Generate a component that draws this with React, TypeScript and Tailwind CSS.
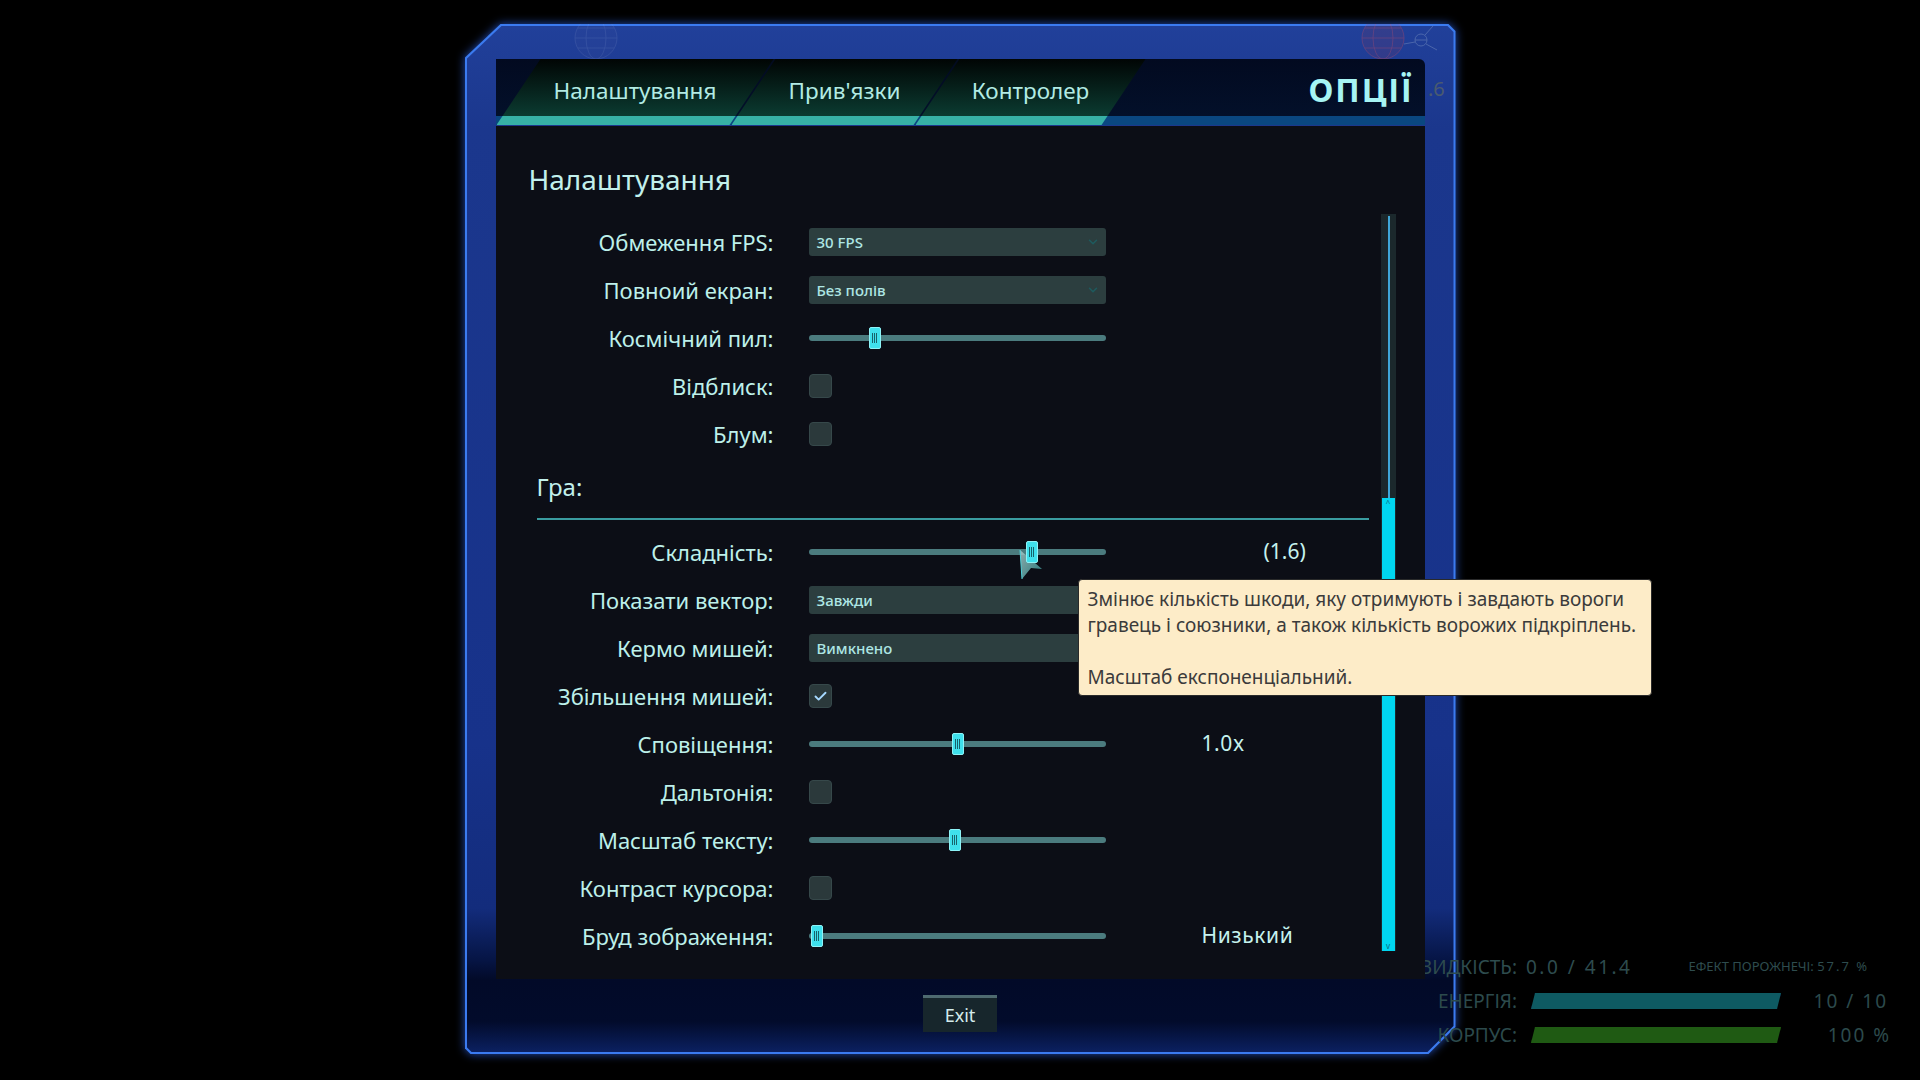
import { Check, ChevronDown } from "lucide-react";

type Row =
  | { label: string; kind: "select"; value: string }
  | { label: string; kind: "check"; checked?: boolean }
  | { label: string; kind: "slider"; thumb: number; value?: string; far?: boolean; cursor?: boolean };

const display: Row[] = [
  { label: "Обмеження FPS:", kind: "select", value: "30 FPS" },
  { label: "Повноий екран:", kind: "select", value: "Без полів" },
  { label: "Космічний пил:", kind: "slider", thumb: 60 },
  { label: "Відблиск:", kind: "check" },
  { label: "Блум:", kind: "check" },
];

const game: Row[] = [
  { label: "Складність:", kind: "slider", thumb: 217, value: "(1.6)", far: true, cursor: true },
  { label: "Показати вектор:", kind: "select", value: "Завжди" },
  { label: "Кермо мишей:", kind: "select", value: "Вимкнено" },
  { label: "Збільшення мишей:", kind: "check", checked: true },
  { label: "Сповіщення:", kind: "slider", thumb: 143, value: "1.0x" },
  { label: "Дальтонія:", kind: "check" },
  { label: "Масштаб тексту:", kind: "slider", thumb: 140 },
  { label: "Контраст курсора:", kind: "check" },
  { label: "Бруд зображення:", kind: "slider", thumb: 2, value: "Низький" },
];

const Slider = ({ thumb, cursor }: { thumb: number; cursor?: boolean }) => (
  <div className="relative h-[22px] w-[297px]">
    <div className="absolute left-0 right-0 top-[8px] h-[6px] rounded-full bg-[#4b7b7e]" />
    {cursor && (
      <svg className="absolute left-[208px] top-[6px]" width="36" height="36" viewBox="0 0 36 36">
        <defs>
          <linearGradient id="cur" x1="0" y1="0" x2="1" y2="1">
            <stop offset="0" stopColor="#a8c8c8" />
            <stop offset="1" stopColor="#2a8c8c" />
          </linearGradient>
        </defs>
        <polygon points="3,3 25,22 14,21 5,32" fill="url(#cur)" opacity="0.85" />
        <polyline points="3,3 5,32" stroke="#4fd0d8" strokeWidth="1" fill="none" />
      </svg>
    )}
    <div
      className="absolute top-0 flex h-[22px] w-[12px] items-center justify-center gap-[1px] rounded-[2px] border border-[#8ef3f7] bg-[#3fe0ec]"
      style={{ left: thumb }}
    >
      <span className="h-[10px] w-px bg-[#17626b]" />
      <span className="h-[10px] w-px bg-[#17626b]" />
      <span className="h-[10px] w-px bg-[#17626b]" />
    </div>
  </div>
);

const Control = ({ row }: { row: Row }) => {
  if (row.kind === "select") {
    return (
      <div className="flex h-[28px] w-[297px] items-center justify-between rounded-[3px] bg-[#2c3e3f] pl-[8px] pr-[6px]">
        <span className="text-[15px] font-medium text-[#aee6e4]">{row.value}</span>
        <ChevronDown size={14} strokeWidth={2.5} color="#1e5b5e" />
      </div>
    );
  }
  if (row.kind === "check") {
    return (
      <div className="flex h-[24px] w-[23px] items-center justify-center rounded-[4px] border border-[#36484a] bg-[#2b393b]">
        {row.checked && <Check size={15} strokeWidth={3} color="#a6d8ff" />}
      </div>
    );
  }
  return <Slider thumb={row.thumb} cursor={row.cursor} />;
};

const SettingRow = ({ row }: { row: Row }) => (
  <div className="flex h-[48px] items-center">
    <div className="w-[245px] whitespace-nowrap text-right text-[22px] text-[#bdf0ea]">{row.label}</div>
    <div className="ml-[35px]">
      <Control row={row} />
    </div>
    {row.kind === "slider" && row.value && (
      <div
        className={
          row.far
            ? "ml-[158px] text-[21px] text-[#c6f2ee]"
            : "ml-[96px] text-[21px] tracking-[0.6px] text-[#c6f2ee]"
        }
      >
        {row.value}
      </div>
    )}
  </div>
);

const Hud = () => (
  <div className="absolute left-[1380px] top-[950px] z-10 w-[520px] font-['Liberation_Sans_Narrow','Noto_Sans',sans-serif] text-[#2c4a4c]">
    <div className="flex h-[34px] items-center">
      <div className="w-[137px] whitespace-nowrap text-right text-[19px] text-[#2e4c4e]">ШВИДКІСТЬ:</div>
      <div className="ml-[9px] text-[19px] tracking-[2.5px] text-[#2e4c4e]">0.0 / 41.4</div>
      <div className="ml-[56px] whitespace-nowrap text-[13px] text-[#2e4c4e]">
        ЕФЕКТ ПОРОЖНЕЧІ: <span className="tracking-[2px]">57.7 %</span>
      </div>
    </div>
    <div className="flex h-[34px] items-center">
      <div className="w-[137px] text-right text-[19px]">ЕНЕРГІЯ:</div>
      <div className="ml-[14px] h-[16px] w-[250px] bg-[#0e5a62] shadow-[0_0_4px_#1838b0] [clip-path:polygon(4px_0,100%_0,calc(100%_-_4px)_100%,0_100%)]" />
      <div className="ml-auto mr-[12px] text-[19px] tracking-[2px]">10 / 10</div>
    </div>
    <div className="flex h-[34px] items-center">
      <div className="w-[137px] text-right text-[19px]">КОРПУС:</div>
      <div className="ml-[14px] h-[16px] w-[250px] bg-[#1f5a13] shadow-[0_0_4px_#2a7a10] [clip-path:polygon(4px_0,100%_0,calc(100%_-_4px)_100%,0_100%)]" />
      <div className="ml-auto mr-[9px] text-[19px] tracking-[2px]">100 %</div>
    </div>
  </div>
);

const tabs = [
  { name: "Налаштування", w: "w-[277px] ml-[1px]" },
  { name: "Прив'язки", w: "w-[226px] ml-[-42px]" },
  { name: "Контролер", w: "w-[230px] ml-[-42px]" },
];

const App = () => {
  return (
    <div className="relative h-[1080px] w-[1920px] overflow-hidden bg-black font-['Noto_Sans','Open_Sans',sans-serif]">
      <Hud />
      <div className="flex justify-center pt-[24px]">
        <div className="relative h-[1030px] w-[991px] px-[31px] pt-[35px]">
          {/* frame */}
          <div className="absolute inset-0 drop-shadow-[0_0_5px_rgba(50,110,255,0.7)]">
            <div className="absolute inset-0 bg-[#3b7bf0] [clip-path:polygon(36px_0,calc(100%_-_7px)_0,100%_7px,100%_calc(100%_-_27px),calc(100%_-_27px)_100%,6px_100%,0_calc(100%_-_6px),0_34px)]" />
            <div className="absolute inset-[2px] bg-[linear-gradient(180deg,#21409a_0%,#1b378d_10%,#17328a_70%,#132c7c_86%,#061545_91%,#020a28_93%,#020b2b_97%,#0b2060_100%)] [clip-path:polygon(35px_0,calc(100%_-_6px)_0,100%_6px,100%_calc(100%_-_26px),calc(100%_-_26px)_100%,5px_100%,0_calc(100%_-_5px),0_33px)]" />
          </div>

          <svg className="absolute left-0 top-0" width="991" height="60" viewBox="0 0 991 60">
            <g opacity="0.18" stroke="#a0a8d0" fill="none" strokeWidth="0.8">
              <circle cx="131" cy="14" r="21" fill="#6a70a0" fillOpacity="0.3" />
              <ellipse cx="131" cy="14" rx="10" ry="21" />
              <line x1="110" y1="14" x2="152" y2="14" />
              <line x1="113" y1="4" x2="149" y2="4" />
              <line x1="113" y1="24" x2="149" y2="24" />
            </g>
            <g opacity="0.4" stroke="#d04a5a" fill="none" strokeWidth="0.8">
              <circle cx="918" cy="14" r="21" fill="#a03040" fillOpacity="0.35" />
              <ellipse cx="918" cy="14" rx="10" ry="21" />
              <line x1="897" y1="14" x2="939" y2="14" />
              <line x1="900" y1="4" x2="936" y2="4" />
              <line x1="900" y1="24" x2="936" y2="24" />
            </g>
            <g opacity="0.4" stroke="#8aa0c8" fill="none" strokeWidth="1">
              <circle cx="956" cy="16" r="6" />
              <line x1="950" y1="16" x2="962" y2="16" />
              <line x1="939" y1="20" x2="950" y2="18" />
              <line x1="960" y1="11" x2="968" y2="2" />
              <line x1="961" y1="20" x2="972" y2="26" />
            </g>
          </svg>

          <span className="absolute left-[952px] top-[50px] text-[20px] text-[#4a5a70]">1.6</span>

          {/* tab bar */}
          <div className="relative z-20 flex h-[66px] rounded-tr-[6px] bg-[linear-gradient(180deg,#020a20_0px,#03102a_57px,#0a4780_57px,#0a4780_66px)]">
            {tabs.map((t) => (
              <div
                key={t.name}
                className={`${t.w} flex h-[66px] shrink-0 items-center justify-center bg-[linear-gradient(180deg,#010504_0px,#0b3b31_57px,#37b1a6_57px,#37b1a6_66px)] pb-[9px] pt-[7px] text-[22.5px] text-[#b2ebe4] [clip-path:polygon(44px_0,100%_0,calc(100%_-_44px)_100%,0_100%)]`}
              >
                {t.name}
              </div>
            ))}
            <div className="ml-auto flex items-center pb-[9px] pr-[11px] pt-[5px] text-[32px] font-bold tracking-[2px] text-[#a6f4f4]">
              ОПЦІЇ
            </div>
          </div>

          {/* content */}
          <div className="relative z-20 mt-[1px] flex h-[853px] bg-[#0c0e16] pl-[33px]">
            <div className="w-[840px]">
              <div className="pt-[35px] text-[28px] leading-[36px] text-[#c2f0ec]">Налаштування</div>
              <div className="mt-[21px]">
                {display.map((r) => (
                  <SettingRow key={r.label} row={r} />
                ))}
              </div>
              <div className="ml-[8px] mt-[11px] text-[24px] leading-[36px] text-[#c2f0ec]">Гра:</div>
              <div className="ml-[8px] mt-[13px] h-[2px] bg-[#3a9ca0]" />
              <div className="mt-[8px]">
                {game.map((r) => (
                  <SettingRow key={r.label} row={r} />
                ))}
              </div>
            </div>
            <div className="relative ml-[12px] mt-[88px] h-[737px] w-[15px] bg-[#1b282c]">
              <div className="absolute left-[7px] top-[2px] h-[282px] w-[2px] bg-[#3fa6d8]" />
              <div className="absolute bottom-0 left-[1px] top-[284px] flex w-[13px] flex-col items-center justify-between bg-[#00d6f0] text-[8px] leading-[10px] text-[#0a6a80]">
                <span>^</span>
                <span>v</span>
              </div>
            </div>
          </div>

          {/* exit */}
          <div className="relative z-20 mt-[16px] flex justify-center">
            <button className="h-[37px] w-[74px] border-t-[3px] border-[#4e6a70] bg-[#17262c] text-[18px] text-[#d4ecec]">
              Exit
            </button>
          </div>

          {/* tooltip */}
          <div className="absolute left-[613px] top-[555px] z-30 h-[117px] w-[574px] whitespace-nowrap rounded-[4px] border border-[#2a2a2a] bg-[#fdecc8] px-[9px] pt-[6px] text-[19px] leading-[26px] text-[#3b3b3b]">
            Змінює кількість шкоди, яку отримують і завдають вороги
            <br />
            гравець і союзники, а також кількість ворожих підкріплень.
            <br />
            <br />
            Масштаб експоненціальний.
          </div>
        </div>
      </div>
    </div>
  );
};

export default App;
